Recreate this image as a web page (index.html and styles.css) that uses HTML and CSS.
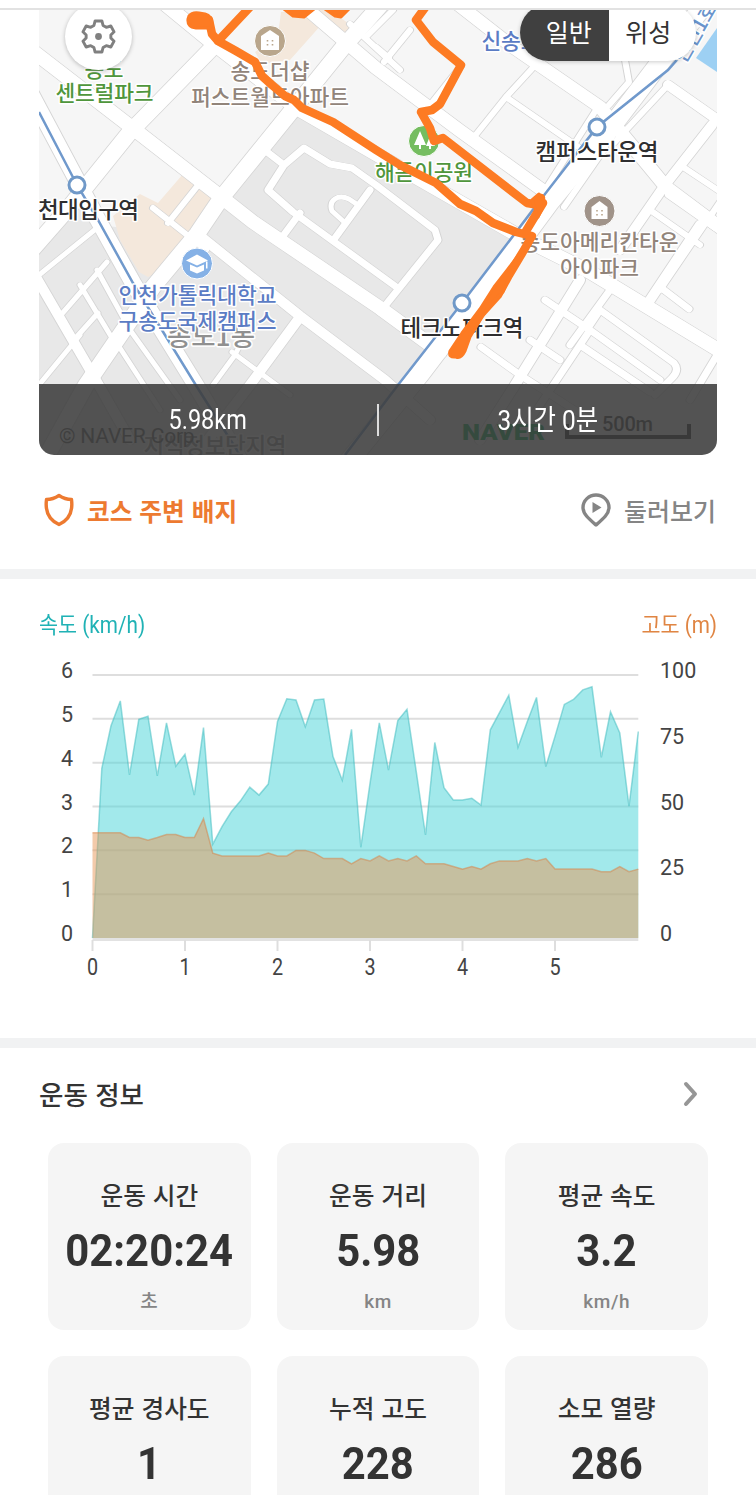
FILE: index.html
```
<!DOCTYPE html>
<html lang="ko">
<head>
  <meta charset="UTF-8" />
  <meta name="viewport" content="width=device-width, initial-scale=1.0"/>
  <title>운동 기록</title>
  <link rel="stylesheet" href="styles.css">
</head>
<body>
  <div class="topline"></div>

  <div class="map">
    <svg class="map-canvas" viewBox="39 10 678 445">
      <defs>
        <g id="roads">
          <!-- main roads -->
          <path stroke-width="14" d="M30 49L135 130L225 200L253 222L380 308L440 352M160 0L215 45L298 109L400 168L526 240L590 272L725 354"/>
          <path stroke-width="16" d="M385 0L345 45L222 197L197 234L153 287L86 385L50 450M214 46L130 132L72 204L30 252M30 92L80 186L98 220L133 283L197 387L240 460"/>
          <path stroke-width="13" d="M300 3L376 68L459 130L545 192M450 -2L510 45L600 107L666 187L725 231"/>
          <path stroke-width="19" d="M700 10L605 135L549 203L515 249L420 374L350 460"/>
          <path stroke-width="10" d="M36 277L93 375L130 440M200 236L300 316L385 380L430 420M300 317L250 385L200 450M580 280L515 385L480 440M700 225L650 300M712 125L665 185L620 250M668 85L725 125"/>
          <!-- side streets -->
          <path stroke-width="7" d="M262 148L284 165M284 165L268 190L293 212L395 286M284 165L304 148L330 164L352 168L376 185L435 230L438 240L380 312M370 190L335 238M300 213L280 240"/>
          <path stroke-width="5" d="M343 221L332 211C328 200 338 194 349 199L358 205M39 275L97 228M97 270L130 330M60 316L107 262M80 285L112 338M72 342L98 313M39 385L80 335M118 345L160 410M130 330L180 400M213 385L235 355L240 345M232 352L290 395"/>
          <path stroke-width="6" d="M153 208L206 250M199 184L168 223"/>
          <path stroke-width="6" d="M410 30L384 62M376 47L389 58M540 60L506 97L470 142M506 97L590 155M461 66L430 105M668 85L614 143M564 207L605 148M609 105L629 82L625 60M596 110L545 190M660 190L630 240M680 165L725 195M668 195L715 228M650 210L700 245M350 24L400 70M393 10L365 38M720 202L660 290"/>
          <path stroke-width="7" d="M664 290L689 309M545 300L590 330L660 380M590 325L600 310L674 363Q680 370 672 378L655 395M580 345L650 392M481 347L520 375L590 420M590 330L530 420M717 355L690 400M610 290L570 345M530 340L560 360"/>
        </g>
      </defs>
      <rect class="land" x="39" y="10" width="678" height="445"/>
      <path class="land-dark" d="M39 245L80 195L98 226L205 230L222 197L293 110L526 240L430 374L360 455H39Z"/>
      <path class="land" d="M92 190L134 139L177 169L216 197L200 240L98 224Z"/>
      <path class="housing" d="M113 216L140 194L158 203L183 174L213 194V207L190 232L156 273L148 277L139 272L120 240ZM281 12H322V24L290 60L262 64L255 52L278 35ZM318 10H330L352 26L345 36Z"/>
      <path class="water" d="M717 28V72L696 58Z"/>
      <path class="housing-yellow" d="M696 10H705L701 16Z"/>
      <use class="road-edge" href="#roads"/>
      <use class="road" href="#roads"/>

      <path class="rail" d="M39 112L77 185L98 220L133 283L197 387L240 455"/>
      <path class="rail" d="M690 45L668 70L597 127L545 194L462 303L398 385L345 455"/>
      <circle class="station" cx="77" cy="185" r="8"/>
      <circle class="station" cx="597" cy="127" r="8"/>
      <circle class="station" cx="462" cy="303" r="8"/>

      <!-- place pins -->
      <g transform="translate(270 41)">
        <circle class="pin pin-home" r="15.5"/>
        <path class="pin-shape" d="M0 -11L9 -5V9H-9V-5Z"/>
        <path class="pin-home-dots" d="M-2.5 -1v1.5M2.5 -1v1.5M-2.5 3v1.5M2.5 3v1.5"/>
      </g>
      <g transform="translate(599.5 211)">
        <circle class="pin pin-apt" r="15.5"/>
        <path class="pin-shape" d="M0 -10L8 -4V8H-8V-4Z"/>
        <path class="pin-apt-dots" d="M-2.5 -1v1.5M2.5 -1v1.5M-2.5 3v1.5M2.5 3v1.5"/>
      </g>
      <g transform="translate(424 141)">
        <circle class="pin pin-park" r="15.5"/>
        <path class="pin-shape" d="M-4 -10L2 4H-3V8H-5V4H-10ZM6 -5L11 5H7V8H5V5H2Z"/>
      </g>
      <g transform="translate(197 263.5)">
        <circle class="pin pin-school" r="15.5"/>
        <path class="pin-shape" d="M0 -9L11 -3L0 2L-11 -3ZM-7 1L0 4L7 1V7L0 10L-7 7ZM9 -2H10.5V5H9Z"/>
      </g>

      <!-- labels -->
      <g class="label">
        <text class="green" x="104" y="77" textLength="39">송도</text>
        <text class="green" x="104.5" y="101" textLength="98">센트럴파크</text>
        <text class="brown" x="270" y="79" textLength="79">송도더샵</text>
        <text class="brown" x="270" y="105" textLength="158">퍼스트월드아파트</text>
        <text class="green" x="424" y="180" textLength="98">해돋이공원</text>
        <text class="dark" x="88.5" y="218" textLength="101">천대입구역</text>
        <text class="dark" x="597" y="160" textLength="123">캠퍼스타운역</text>
        <text class="dark" x="462" y="336" textLength="123">테크노파크역</text>
        <text class="brown" x="599.5" y="250" textLength="158">송도아메리칸타운</text>
        <text class="brown" x="599.5" y="276" textLength="79">아이파크</text>
        <text class="gray district" x="211" y="346" textLength="88" lengthAdjust="spacingAndGlyphs">송도1동</text>
        <text class="blue" x="197.5" y="303" textLength="158">인천가톨릭대학교</text>
        <text class="blue" x="197.5" y="329" textLength="158">구송도국제캠퍼스</text>
        <text class="blue" x="511" y="49" textLength="59">신송도</text>
        <text class="line-name" transform="translate(706 28) rotate(-60)">인천1호선</text>
        <text class="gray" x="215" y="454" textLength="143">지식정보단지역</text>
      </g>
      <text class="copyright" x="59" y="443" textLength="141">© NAVER Corp.</text>
      <text class="naver" x="462" y="440" textLength="83" lengthAdjust="spacingAndGlyphs">NAVER</text>
      <text class="scale-text" x="602" y="431" textLength="51">500m</text>
      <path class="scale-bar" d="M567 424V437H689V424"/>

      <!-- walked course -->
      <path class="route" d="M195 21L209 20L212 34L218 41L236 51L255 62L262 76L272 85L285 96L294 100L302 108L333 122L376 150L400 165L436 183L460 204L476 211L493 223L516 232L532 236L524 250L509 275L498 295L479 316L466 337L457 353"/>
      <path class="route" d="M218 41L250 7M427 5L416 20L433 42L461 65L440 104L432 110L421 112L430 128L434 141L443 138L527 203L533 204L541 198M543 203L526 231"/>
      <path class="route-fill" d="M189 16Q192 12 199 13L205 14Q212 16 212 24L210 28H196Q187 27 188 19ZM532 200L539 194L545 202L538 217ZM508 269L520 253L503 292L490 304L470 337L465 351Q461 359 456 357Q448 358 450 351L462 333L480 309L494 287ZM284 9L293 16L304 17L314 9ZM325 9L335 16L341 17L349 9Z"/>
    </svg>

    <button class="settings" aria-label="설정">
      <svg viewBox="0 0 36 36">
        <path d="M14.500 2H21.500L22.700 6.700L26 8.600L30.700 7.200L34 13.200L30.700 16.500V19.500L34 22.800L30.700 28.800L26 27.400L22.700 29.300L21.500 34H14.500L13.300 29.300L10 27.400L5.300 28.800L2 22.800L5.300 19.500V16.500L2 13.200L5.300 7.200L10 8.600L13.300 6.700Z"/>
        <circle cx="18" cy="18" r="3.5"/>
      </svg>
    </button>

    <div class="map-type">
      <span class="map-type-item active">일반</span>
      <span class="map-type-item">위성</span>
    </div>

    <div class="map-summary">
      <div class="summary-item"><span>5.98km</span></div>
      <div class="summary-line"></div>
      <div class="summary-item time"><span>3시간 0분</span></div>
    </div>
  </div>

  <div class="links">
    <div class="link badge-link">
      <svg class="shield" viewBox="0 0 30 34"><path d="M15 2.500Q21 6.500 27.500 6.500C29 18 25 27 15 31.500C5 27 1 18 2.500 6.500Q9 6.500 15 2.500Z"/></svg>
      코스 주변 배지
    </div>
    <div class="link tour-link">
      <svg class="marker" viewBox="0 0 30 34"><path d="M15 2C22 2 28 7.500 28 14.500C28 21 22 26 15 32C8 26 2 21 2 14.500C2 7.500 8 2 15 2Z"/><path class="play" d="M11.500 9L20.500 14.500L11.500 20Z"/></svg>
      둘러보기
    </div>
  </div>

  <div class="divider"></div>

  <div class="chart-section">
    <div class="chart-head">
      <span class="speed-title">속도 (km/h)</span>
      <span class="height-title">고도 (m)</span>
    </div>
    <svg class="chart" id="chart" viewBox="0 650 756 340"></svg>
  </div>

  <div class="divider"></div>

  <div class="info">
    <div class="info-head">
      <h2>운동 정보</h2>
      <svg class="arrow" viewBox="0 0 18 28"><path d="M4 4L13 14L4 24"/></svg>
    </div>
    <div class="cards">
      <div class="card"><h3>운동 시간</h3><strong>02:20:24</strong><small>초</small></div>
      <div class="card"><h3>운동 거리</h3><strong>5.98</strong><small>km</small></div>
      <div class="card"><h3>평균 속도</h3><strong>3.2</strong><small>km/h</small></div>
      <div class="card"><h3>평균 경사도</h3><strong>1</strong></div>
      <div class="card"><h3>누적 고도</h3><strong>228</strong></div>
      <div class="card"><h3>소모 열량</h3><strong>286</strong></div>
    </div>
  </div>

  <script>
    // one sample every 0.1 km
    const speed = [0, 3.87, 4.84, 5.41, 3.72, 4.99, 5.06, 3.7, 4.91, 3.92, 4.19, 3.26, 4.8, 2.14, 2.54, 2.88, 3.13, 3.44, 3.26, 3.51,
      4.94, 5.46, 5.43, 4.82, 5.43, 5.45, 4.14, 3.6, 4.76, 2.07, 3.53, 4.91, 3.83, 4.96, 5.22, 3.79, 2.35, 4.46, 3.43, 3.15,
      3.15, 3.19, 3.03, 4.75, 5.14, 5.54, 4.35, 4.94, 5.49, 3.91, 4.6, 5.33, 5.44, 5.66, 5.73, 4.12, 5.16, 4.68, 3.01, 4.71];
    const height = [40, 40, 40, 40, 38.2, 38.2, 37.2, 38.2, 39.3, 39.3, 38.2, 38.2, 45.4, 32.3, 31.2, 31.2, 31.2, 31.2, 31.2, 32.3,
      31.2, 31.2, 33.3, 33.3, 32.3, 30.2, 30.2, 30.2, 28.2, 30.2, 29.3, 31.2, 29.3, 30.2, 29.3, 31.2, 28.2, 28.2, 28.2, 27.2,
      26.2, 27.2, 26.2, 28.2, 29.3, 29.3, 29.3, 30.2, 29.3, 30.2, 26.2, 26.2, 26.2, 26.2, 26.2, 25.2, 25.2, 27.2, 25.2, 26.2];

    const left = 92.5, right = 638.3, bottom = 938, full = 263;

    function points(values, max) {
      return values.map((v, i) => `${(left + i * 9.25).toFixed(1)},${(bottom - v / max * full).toFixed(1)}`).join(' ');
    }

    function series(name, values, max) {
      const p = points(values, max);
      return `<polygon class="${name}-area" points="${left},${bottom} ${p} ${right},${bottom}"/>
        <polyline class="${name}-line" points="${p}"/>`;
    }

    let out = '';
    for (let i = 0; i <= 6; i++) {
      const y = bottom - i * full / 6;
      if (i) out += `<line class="grid" x1="${left}" x2="${right}" y1="${y}" y2="${y}"/>`;
      out += `<text class="axis" x="67" y="${y + 3}">${i}</text>`;
    }
    for (let i = 0; i <= 4; i++) {
      out += `<text class="axis-right" x="660" y="${bottom + 3 - i * full / 4}">${i * 25}</text>`;
    }
    out += `<line class="base" x1="${left}" x2="${right}" y1="939.5" y2="939.5"/>`;
    for (let i = 0; i <= 5; i++) {
      const x = left + i * 92.5;
      out += `<line class="grid" x1="${x}" x2="${x}" y1="940" y2="951"/>`;
      out += `<text class="axis-bottom" transform="translate(${x} 975) scale(.86 1)">${i}</text>`;
    }
    out += series('speed', speed, 6) + series('height', height, 100);
    document.getElementById('chart').innerHTML = out;
  </script>
</body>
</html>
```

FILE: styles.css
```
* {
  box-sizing: border-box;
}

body {
  margin: 0;
  height: 1495px;
  overflow: hidden;
  background: #fff;
  color: #333;
  font-family: Roboto, "Noto Sans CJK KR", sans-serif;
}

h2, h3 {
  margin: 0;
  font-weight: 500;
}

.topline {
  height: 10px;
  border-bottom: 2px solid #e2e2e2;
}

/* map */
.map {
  position: relative;
  width: 678px;
  height: 445px;
  margin: 0 auto;
  overflow: hidden;
  border-radius: 0 0 15px 15px;
}

.map-canvas {
  display: block;
  width: 678px;
  height: 445px;
}

.land { fill: #f6f6f6; }
.land-dark { fill: #e8e8e8; }
.housing { fill: #f4e8dc; }
.housing-yellow { fill: #fae3a0; }
.water { fill: #9dd0f3; }

.road, .road-edge {
  fill: none;
  stroke: #fff;
  stroke-linejoin: round;
  stroke-linecap: round;
}

/* the same streets, pushed out a pixel on each side */
.road-edge {
  stroke: #d2d2d2;
  filter: drop-shadow(1px 0 0 #d4d4d4) drop-shadow(-1px 0 0 #d4d4d4);
}

.rail {
  fill: none;
  stroke: #7099cc;
  stroke-width: 2.5;
}

.station {
  fill: #fff;
  stroke: #7099c8;
  stroke-width: 3;
}

.pin {
  stroke: #fff;
  stroke-width: 1;
}

.pin-home { fill: #b9a68c; }
.pin-apt { fill: #a09389; }
.pin-park { fill: #75bd60; }
.pin-school { fill: #85b1e6; }
.pin-shape { fill: #fff; }

.pin-home-dots, .pin-apt-dots {
  stroke: #b9a68c;
  stroke-width: 1.6;
}

.label text {
  font-family: "Noto Sans CJK KR", sans-serif;
  font-size: 21.5px;
  font-weight: 500;
  text-anchor: middle;
  paint-order: stroke;
  stroke: #fff;
  stroke-width: 3px;
  stroke-linejoin: round;
}

.label .green { fill: #4f963c; }
.label .brown { fill: #91847a; }
.label .dark { fill: #2e2e30; font-size: 22.5px; }
.label .blue { fill: #5b7cc4; }
.label .gray { fill: #909090; font-size: 22.5px; }
.label .district { font-size: 26px; }
.label .line-name { fill: #6a94cc; font-size: 20px; }

.copyright {
  font-size: 21px;
  fill: #555;
}

.naver {
  font-size: 22px;
  font-weight: 900;
  fill: #03a94d;
}

.scale-text {
  font-size: 20px;
  font-weight: 500;
  fill: #333;
}

.scale-bar {
  fill: none;
  stroke: #222;
  stroke-width: 4;
}

.route {
  fill: none;
  stroke: #fd7b23;
  stroke-width: 8.5;
  stroke-linejoin: round;
  stroke-linecap: round;
}

.route-fill {
  fill: #fd7b23;
  stroke: #fd7b23;
  stroke-width: 3;
  stroke-linejoin: round;
}

.settings {
  position: absolute;
  top: -7px;
  left: 26px;
  display: flex;
  align-items: center;
  justify-content: center;
  width: 67px;
  height: 67px;
  padding: 0;
  border: none;
  border-radius: 50%;
  background: #fff;
  box-shadow: 0 1px 4px rgba(0,0,0,0.25);
}

.settings svg {
  width: 35px;
  height: 35px;
}

.settings path {
  fill: none;
  stroke: #808080;
  stroke-width: 3;
  stroke-linejoin: round;
}

.settings circle {
  fill: #808080;
}

.map-type {
  position: absolute;
  top: -6px;
  left: 481px;
  display: flex;
  width: 176px;
  height: 57px;
  overflow: hidden;
  border-radius: 29px;
  background: #fff;
  box-shadow: 0 1px 4px rgba(0,0,0,0.2);
}

.map-type-item {
  flex: 1;
  padding-right: 8px;
  font: 25px/54px "Noto Sans CJK KR", sans-serif;
  text-align: center;
}

.map-type-item.active {
  padding: 0 0 0 9px;
  background: #404040;
  color: #fff;
}

.map-summary {
  position: absolute;
  left: 0;
  right: 0;
  bottom: 0;
  display: flex;
  align-items: center;
  height: 71px;
  background: rgba(60,60,60,0.88);
  color: #fff;
  font-size: 28px;
}

.summary-item {
  flex: 1;
  text-align: center;
}

.summary-item span {
  display: inline-block;
  transform: scaleX(.84);
}

.summary-item.time {
  padding-bottom: 4px;
}

.time span {
  transform: scaleX(.87);
}

.summary-line {
  width: 2px;
  height: 32px;
  background: #ddd;
}

/* links under the map */
.links {
  display: flex;
  align-items: center;
  justify-content: space-between;
  height: 114px;
  padding: 0 40px 4px 44px;
}

.link {
  display: flex;
  align-items: center;
  gap: 13px;
  font: 500 25px/36px "Noto Sans CJK KR", sans-serif;
}

.link svg {
  width: 30px;
  height: 34px;
  fill: none;
  stroke: currentColor;
  stroke-width: 3.4;
  stroke-linejoin: round;
}

.badge-link {
  color: #ed7a30;
  font-size: 24.7px;
  font-weight: 700;
}

.tour-link {
  color: #858585;
}

.link .play {
  fill: currentColor;
  stroke: none;
}

.divider {
  height: 10px;
  background: #f1f2f3;
}

/* chart */
.chart-section {
  height: 459px;
}

.chart-head {
  display: flex;
  justify-content: space-between;
  height: 71px;
  padding: 29px 39px 0;
  font: 23px/36px Roboto, "Noto Sans CJK KR", sans-serif;
}

.chart-head span {
  transform: scaleX(.9);
}

.speed-title {
  color: #20b2b5;
  transform-origin: left;
}

.height-title {
  color: #e08543;
  transform-origin: right;
}

.chart {
  display: block;
  width: 756px;
  height: 340px;
}

.grid {
  stroke: #dedede;
  stroke-width: 2;
}

.base {
  stroke: #e2e2e2;
  stroke-width: 3;
}

.speed-area { fill: rgba(69,211,215,0.5); }
.height-area { fill: rgba(232,150,85,0.5); }

.speed-line, .height-line {
  fill: none;
  stroke: rgba(60,185,190,0.5);
  stroke-width: 1.5;
}

.height-line {
  stroke: rgba(215,130,70,0.5);
}

.axis, .axis-right, .axis-bottom {
  fill: #444;
  font-size: 21.5px;
  text-anchor: middle;
}

.axis-right {
  text-anchor: start;
}

.axis-bottom {
  font-size: 23px;
}

/* workout info */
.info-head {
  display: flex;
  align-items: center;
  justify-content: space-between;
  height: 95px;
  padding: 0 56px 4px 39px;
}

.info-head h2 {
  font: 500 26.5px/40px "Noto Sans CJK KR", sans-serif;
}

.arrow {
  width: 18px;
  height: 28px;
  fill: none;
  stroke: #969696;
  stroke-width: 4;
  stroke-linecap: round;
  stroke-linejoin: round;
}

.cards {
  display: grid;
  grid-template-columns: repeat(3, 1fr);
  gap: 26px;
  padding: 0 48px;
}

.card {
  display: flex;
  flex-direction: column;
  align-items: center;
  height: 187px;
  padding-top: 32px;
  border-radius: 16px;
  background: #f5f5f5;
}

.card h3 {
  font: 500 24.7px/38px "Noto Sans CJK KR", sans-serif;
}

.card strong {
  margin-top: 10px;
  font-size: 45px;
  line-height: 56px;
  font-weight: 700;
  transform: scaleX(.93);
}

.card small {
  margin-top: 9px;
  color: #858585;
  font-size: 19px;
  line-height: 28px;
  font-weight: 500;
  letter-spacing: .6px;
}
```
